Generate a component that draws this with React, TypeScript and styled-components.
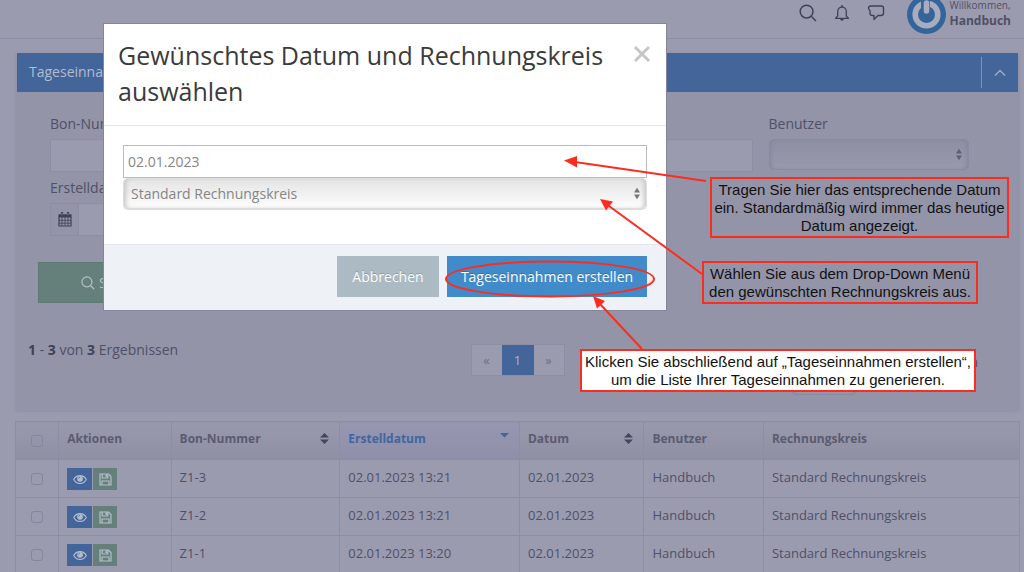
import React from "react";
import styled, { createGlobalStyle, css } from "styled-components";

const sans = `"Open Sans", "Noto Sans", sans-serif`;
const c = {
  page: "#9b9bb0",
  panel: "#9494a9",
  line: "#8d8da3",
  text: "#4f5066",
  strong: "#404157",
  blue: "#436599",
  green: "#65807b",
  red: "#fc2d1f",
};

const Global = createGlobalStyle`
  *, *::before, *::after { box-sizing: border-box; }
  body {
    margin: 0;
    overflow: hidden;
    background: ${c.page};
    color: ${c.text};
    font: 14px/18px ${sans};
  }
  button, input, select { font: inherit; color: inherit; margin: 0; }
`;

const Page = styled.div`
  position: relative;
  height: 100vh;
  overflow: hidden;
`;

const Topbar = styled.header`
  display: flex;
  justify-content: flex-end;
  align-items: flex-end;
  height: 39px;
  padding: 0 13px 4px 0;
  border-bottom: 1px solid ${c.line};
`;

const TopIcons = styled.nav`
  display: flex;
  gap: 16px;
  margin: 0 22px 12px 0;
`;

const IconButton = styled.button`
  display: flex;
  padding: 0;
  border: 0;
  background: none;
  color: ${c.strong};
`;

const User = styled.div`
  display: flex;
  align-items: flex-end;
  gap: 4px;
`;

const UserName = styled.div`
  padding-bottom: 5px;
  span {
    display: block;
    margin-bottom: 3px;
    font-size: 10px;
    line-height: 10px;
  }
  strong {
    display: block;
    font-size: 12px;
    font-weight: 700;
    line-height: 16px;
  }
`;

const Main = styled.main`
  padding: 14px 4px 0 15px;
`;

const Panel = styled.section`
  height: 359px;
  padding: 0 2px;
  border-radius: 4px;
  background: ${c.panel};
  box-shadow: 0 0 3px ${c.panel};
`;

const PanelHead = styled.div`
  display: flex;
  align-items: center;
  justify-content: space-between;
  height: 39px;
  padding-left: 12px;
  background: ${c.blue};
  color: #b3bccf;
`;

const PanelTitle = styled.h2`
  margin: 0;
  padding-bottom: 2px;
  font-size: 14px;
  font-weight: 400;
`;

const Collapse = styled.button`
  display: grid;
  place-items: center;
  width: 37px;
  height: 31px;
  padding: 0;
  border: 0;
  border-left: 1px solid #8493b3;
  background: none;
`;

const Filters = styled.form`
  padding: 23px 26px 0 33px;
`;

const FilterGrid = styled.div`
  display: grid;
  grid-template-columns: repeat(4, 1fr);
  column-gap: 16px;
  row-gap: 7px;
`;

const Field = styled.div`
  label {
    display: block;
    height: 24px;
  }
`;

const TextInput = styled.input`
  display: block;
  width: 100%;
  height: 33px;
  padding: 0 5px;
  border: 1px solid ${c.line};
  background: ${c.page};
`;

const DateGroup = styled.div`
  display: flex;
  span {
    display: grid;
    place-items: center;
    flex: 0 0 28px;
    height: 33px;
    border: 1px solid ${c.line};
    border-right: 0;
    color: ${c.strong};
  }
`;

const SelectBox = styled.div<{ $modal?: boolean; $width?: string }>`
  position: relative;
  width: ${(p) => p.$width ?? "100%"};
  select {
    display: block;
    appearance: none;
    width: 100%;
    height: 31px;
    padding: 0 8px;
    border: 1px solid #898a9f;
    border-radius: 5px;
    background: linear-gradient(#8f8fa4, #9999ae);
    box-shadow: inset 3px 0 4px -2px #85869b, inset -3px 0 4px -2px #85869b;
    ${(p) =>
      p.$modal &&
      css`
        height: 32px;
        padding: 0 7px;
        border-color: #dedede;
        border-bottom: 2px solid #dcdcdc;
        background: linear-gradient(#e4e4e4, #fdfdfd);
        box-shadow: inset 4px 0 4px -2px #c8c8c8, inset -4px 0 4px -2px #c8c8c8;
        color: #858585;
      `}
  }
  svg {
    position: absolute;
    right: 6px;
    top: 9px;
    pointer-events: none;
    color: ${(p) => (p.$modal ? "#777" : "#5f6075")};
  }
`;

const SearchButton = styled.button`
  display: flex;
  align-items: center;
  justify-content: center;
  gap: 4px;
  width: 152px;
  height: 41px;
  margin: 26px 0 0 -12px;
  border: 1px solid #5c7b73;
  background: ${c.green};
  color: #b6bfc8;
`;

const ResultBar = styled.div`
  display: grid;
  grid-template-columns: 1fr auto 1fr;
  padding: 38px 11px 0;
  strong { color: ${c.strong}; }
`;

const Pager = styled.nav`
  display: flex;
  height: 32px;
  margin-top: 3px;
  border: 1px solid ${c.line};
`;

const PagerLink = styled.a<{ $active?: boolean }>`
  display: grid;
  place-items: center;
  width: ${(p) => (p.$active ? 32 : 30)}px;
  background: ${(p) => (p.$active ? c.blue : c.page)};
  color: ${(p) => (p.$active ? "#a9b4ca" : "#6b6c82")};
  font-size: 13px;
  text-decoration: none;
`;

const PageSize = styled.div`
  justify-self: end;
  width: 187px;
  margin-right: 29px;
  padding-top: 12px;
  label {
    display: block;
    text-align: right;
  }
  select { height: 24px; }
  svg { top: 5px; }
`;

const Table = styled.table`
  width: 100%;
  margin-top: 9px;
  border-collapse: collapse;
  table-layout: fixed;
  font-size: 13px;
  th, td {
    height: 38px;
    padding: 0 8px 4px;
    border: 1px solid ${c.line};
    text-align: left;
    vertical-align: middle;
    white-space: nowrap;
  }
`;

const Th = styled.th<{ $active?: boolean }>`
  background: ${(p) => (p.$active ? "linear-gradient(#9696b0, #8f8fa9)" : "linear-gradient(#9999ae, #9090a5)")};
  color: ${(p) => (p.$active ? "#3f66a0" : "#5a5b70")};
  font-size: 12px;
  font-weight: 700;
  div {
    display: flex;
    align-items: center;
    justify-content: space-between;
    padding-right: 2px;
  }
`;

const Tick = styled.input`
  display: block;
  appearance: none;
  width: 12px;
  height: 12px;
  margin: 4px auto 0 !important;
  border: 1px solid #85869b;
  border-radius: 3px;
`;

const Actions = styled.div`
  display: flex;
  gap: 1px;
  padding-top: 4px;
`;

const ActionButton = styled.button<{ $green?: boolean }>`
  display: grid;
  place-items: center;
  width: ${(p) => (p.$green ? 24 : 25)}px;
  height: 22px;
  padding: 2px 0 0;
  border: 0;
  background: ${(p) => (p.$green ? c.green : c.blue)};
  color: #b5bdcc;
`;

const Modal = styled.div`
  position: absolute;
  top: 23px;
  left: 103px;
  width: 564px;
  border: 1px solid #84859a;
  background: #fff;
`;

const ModalHead = styled.div`
  display: flex;
  justify-content: space-between;
  align-items: flex-start;
  padding: 13px 15px 16px 14px;
  border-bottom: 1px solid #e5e5e5;
  h1 {
    margin: 0;
    color: #3b3b3b;
    font-size: 25px;
    font-weight: 400;
    line-height: 36px;
  }
`;

const Close = styled.button`
  display: flex;
  padding: 8px 0 0;
  border: 0;
  background: none;
`;

const ModalBody = styled.div`
  padding: 19px 19px 34px;
`;

const ModalInput = styled.input`
  display: block;
  width: 100%;
  height: 33px;
  padding: 0 4px;
  border: 1px solid #bbb;
  color: #858585;
`;

const ModalFoot = styled.div`
  display: flex;
  justify-content: flex-end;
  gap: 8px;
  padding: 11px 19px 13px;
  border-top: 1px solid #e3e7ec;
  background: #eef1f6;
`;

const ModalButton = styled.button<{ $primary?: boolean }>`
  width: ${(p) => (p.$primary ? 200 : 102)}px;
  height: 41px;
  padding: 0;
  border: 0;
  background: ${(p) => (p.$primary ? "#428bca" : "#abbac3")};
  color: #fff;
  text-shadow: 0 -1px 0 rgba(0, 0, 0, 0.2);
`;

const Marks = styled.svg`
  position: absolute;
  top: 0;
  left: 0;
  pointer-events: none;
`;

const Note = styled.p<{ $x: number; $y: number; $w: number; $filled?: boolean }>`
  position: absolute;
  left: ${(p) => p.$x}px;
  top: ${(p) => p.$y}px;
  width: ${(p) => p.$w}px;
  margin: 0;
  padding: 2px 0 1px;
  border: 2px solid ${c.red};
  background: ${(p) => (p.$filled ? "#fff" : c.panel)};
  color: #111;
  font: 15px/18px "Liberation Sans", sans-serif;
  text-align: center;
  white-space: nowrap;
`;

const SearchIcon = ({ size = 18 }: { size?: number }) => (
  <svg width={size} height={size} viewBox="0 0 18 18" fill="none" stroke="currentColor" strokeWidth="1.5">
    <circle cx="7.6" cy="7.6" r="6.4" />
    <path d="M12.2 12.2 17 17" />
  </svg>
);

const BellIcon = () => (
  <svg width="18" height="18" viewBox="0 0 18 18" fill="none" stroke="currentColor" strokeWidth="1.3">
    <path d="M9 1v2M4.700 12V7.600C4.700 5 6.500 3 9 3s4.300 2 4.300 4.600V12l2.200 2.400h-13z" strokeLinejoin="round" />
    <path d="M7.200 15h3.600a1.800 1.800 0 0 1-3.600 0z" fill="currentColor" stroke="none" />
  </svg>
);

const ChatIcon = () => (
  <svg width="18" height="18" viewBox="0 0 18 18" fill="none" stroke="currentColor" strokeWidth="1.4">
    <path d="M3.500 2h11a2 2 0 0 1 2 2v5a2.500 2.500 0 0 1-2.500 2.500h-3L7 15.500v-4H5.500A2.500 2.500 0 0 1 3 9V7L1.600 4.500A2 2 0 0 1 3.500 2z" strokeLinejoin="round" />
  </svg>
);

const Avatar = () => (
  <svg width="39" height="39" viewBox="0 0 39 39" fill="none">
    <circle cx="19.500" cy="19.500" r="19.500" fill="#33659b" />
    <circle cx="19.500" cy="19.500" r="11.300" stroke="#a9abbf" strokeWidth="5.600" />
    <path d="M18.500 4v15" stroke="#33659b" strokeWidth="9" />
    <path d="M19.500 8v8" stroke="#a9abbf" strokeWidth="5.600" strokeLinecap="round" />
  </svg>
);

const CalendarIcon = () => (
  <svg width="14" height="15" viewBox="0 0 14 15">
    <path d="M1 3h12v11H1z" fill="none" stroke="currentColor" strokeWidth="1.200" />
    <path d="M1 2.500h12v3H1z" fill="currentColor" />
    <path d="M4 5v9M7 5v9M10 5v9M1 8.300h12M1 11.200h12" stroke="currentColor" strokeWidth=".8" />
    <path d="M4 1v2.500M10 1v2.500" stroke="currentColor" strokeWidth="2.400" strokeLinecap="round" />
    <path d="M4 1.200v2M10 1.200v2" stroke="#9494a9" strokeWidth=".8" />
  </svg>
);

const EyeIcon = () => (
  <svg width="14" height="11" viewBox="0 0 14 11">
    <path d="M.7 5.500C3.500.300 10.500.300 13.300 5.500 10.500 10.700 3.500 10.700.7 5.500z" fill="none" stroke="currentColor" strokeWidth="1.100" />
    <circle cx="7" cy="4.800" r="2.900" fill="currentColor" />
    <path d="M5.500 4.600A1.600 1.600 0 0 1 7 3.200" fill="none" stroke="#436599" strokeWidth=".7" />
  </svg>
);

const SaveIcon = () => (
  <svg width="13" height="13" viewBox="0 0 13 13" fill="none" stroke="currentColor" strokeWidth="1.200">
    <path d="M1 1h8.500L12 3.500V12H1z" />
    <path d="M3.200 1v4h5.600V1M3 12V8h7v4" />
    <path d="M6.500 1.500h1.500v2.500H6.500z" fill="currentColor" stroke="none" />
  </svg>
);

const Arrows = () => (
  <svg width="8" height="13" viewBox="0 0 8 13" fill="currentColor">
    <path d="M4 .8 7 5.500H1zM4 12.200 1 7.500h6z" />
  </svg>
);

const SortIcon = () => (
  <svg width="9" height="11" viewBox="0 0 9 11" fill="#45465b">
    <path d="M4.500 0 9 4.600H0zM4.500 11 0 6.400h9z" />
  </svg>
);

const SortedIcon = () => (
  <svg width="9" height="11" viewBox="0 0 9 11" fill="#3f66a0">
    <path d="M0 0h9L4.500 4.600z" />
  </svg>
);

const rows = [
  ["Z1-3", "02.01.2023 13:21"],
  ["Z1-2", "02.01.2023 13:21"],
  ["Z1-1", "02.01.2023 13:20"],
];

export default function App() {
  return (
    <Page>
      <Global />
      <Topbar>
        <TopIcons>
          <IconButton aria-label="Suche"><SearchIcon /></IconButton>
          <IconButton aria-label="Meldungen"><BellIcon /></IconButton>
          <IconButton aria-label="Nachrichten"><ChatIcon /></IconButton>
        </TopIcons>
        <User>
          <Avatar />
          <UserName><span>Willkommen,</span><strong>Handbuch</strong></UserName>
        </User>
      </Topbar>

      <Main>
        <Panel>
          <PanelHead>
            <PanelTitle>Tageseinnahmen</PanelTitle>
            <Collapse aria-label="Einklappen">
              <svg width="12" height="8" viewBox="0 0 12 8" fill="none" stroke="#a3adc4" strokeWidth="1.400">
                <path d="M1 6.500 6 1.500l5 5" />
              </svg>
            </Collapse>
          </PanelHead>
          <Filters onSubmit={(e) => e.preventDefault()}>
            <FilterGrid>
              <Field>
                <label htmlFor="bon">Bon-Nummer</label>
                <TextInput id="bon" />
              </Field>
              <Field>
                <label htmlFor="from">Datum von</label>
                <TextInput id="from" />
              </Field>
              <Field>
                <label htmlFor="to">Datum bis</label>
                <TextInput id="to" />
              </Field>
              <Field>
                <label htmlFor="user">Benutzer</label>
                <SelectBox $width="200px">
                  <select id="user" />
                  <Arrows />
                </SelectBox>
              </Field>
              <Field>
                <label htmlFor="created">Erstelldatum</label>
                <DateGroup>
                  <span><CalendarIcon /></span>
                  <TextInput id="created" />
                </DateGroup>
              </Field>
            </FilterGrid>
            <SearchButton><SearchIcon size={14} />Suchen</SearchButton>
          </Filters>
          <ResultBar>
            <div><strong>1</strong> - <strong>3</strong> von <strong>3</strong> Ergebnissen</div>
            <Pager aria-label="Seiten">
              <PagerLink href="#prev">«</PagerLink>
              <PagerLink href="#1" $active>1</PagerLink>
              <PagerLink href="#next">»</PagerLink>
            </Pager>
            <PageSize>
              <label htmlFor="size">Ergebnisse anzeigen</label>
              <SelectBox $width="66px">
                <select id="size" />
                <Arrows />
              </SelectBox>
            </PageSize>
          </ResultBar>
        </Panel>

        <Table>
          <colgroup>
            <col style={{ width: "4.300%" }} />
            <col style={{ width: "11.200%" }} />
            <col style={{ width: "16.800%" }} />
            <col style={{ width: "17.900%" }} />
            <col style={{ width: "12.400%" }} />
            <col style={{ width: "11.900%" }} />
            <col />
          </colgroup>
          <thead>
            <tr>
              <Th><Tick type="checkbox" aria-label="Alle auswählen" /></Th>
              <Th>Aktionen</Th>
              <Th><div>Bon-Nummer<SortIcon /></div></Th>
              <Th $active><div>Erstelldatum<SortedIcon /></div></Th>
              <Th><div>Datum<SortIcon /></div></Th>
              <Th>Benutzer</Th>
              <Th>Rechnungskreis</Th>
            </tr>
          </thead>
          <tbody>
            {rows.map(([bon, created]) => (
              <tr key={bon}>
                <td><Tick type="checkbox" aria-label={bon} /></td>
                <td>
                  <Actions>
                    <ActionButton aria-label="Ansehen"><EyeIcon /></ActionButton>
                    <ActionButton aria-label="Speichern" $green><SaveIcon /></ActionButton>
                  </Actions>
                </td>
                <td>{bon}</td>
                <td>{created}</td>
                <td>02.01.2023</td>
                <td>Handbuch</td>
                <td>Standard Rechnungskreis</td>
              </tr>
            ))}
          </tbody>
        </Table>
      </Main>

      <Modal role="dialog" aria-labelledby="dialog-title">
        <ModalHead>
          <h1 id="dialog-title">Gewünschtes Datum und Rechnungskreis auswählen</h1>
          <Close aria-label="Schließen">
            <svg width="18" height="18" viewBox="0 0 18 18" stroke="#c6c6c6" strokeWidth="3">
              <path d="M2 2l14 14M16 2 2 16" />
            </svg>
          </Close>
        </ModalHead>
        <ModalBody>
          <ModalInput aria-label="Datum" defaultValue="02.01.2023" />
          <SelectBox $modal>
            <select aria-label="Rechnungskreis"><option>Standard Rechnungskreis</option></select>
            <Arrows />
          </SelectBox>
        </ModalBody>
        <ModalFoot>
          <ModalButton>Abbrechen</ModalButton>
          <ModalButton $primary>Tageseinnahmen erstellen</ModalButton>
        </ModalFoot>
      </Modal>

      <Note $x={710} $y={177} $w={299}>
        Tragen Sie hier das entsprechende Datum<br />ein. Standardmäßig wird immer das heutige<br />Datum angezeigt.
      </Note>
      <Note $x={702} $y={261} $w={276}>
        Wählen Sie aus dem Drop-Down Menü<br />den gewünschten Rechnungskreis aus.
      </Note>
      <Note $x={580} $y={349} $w={396} $filled>
        Klicken Sie abschließend auf „Tageseinnahmen erstellen“,<br />um die Liste Ihrer Tageseinnahmen zu generieren.
      </Note>
      <Marks width="1024" height="572" viewBox="0 0 1024 572" fill="none" stroke={c.red} strokeWidth="2">
        <path d="M706 181 575 162M702 274 609 206M642 349 600 304" />
        <ellipse cx="550" cy="279" rx="104" ry="17.500" />
        <g fill={c.red} stroke="none">
          <path d="M564 160.500 577 156v11.500z" />
          <path d="M600 199 613 201.500 606 210.500z" />
          <path d="M593 296 605 301 597 308.500z" />
        </g>
      </Marks>
    </Page>
  );
}
